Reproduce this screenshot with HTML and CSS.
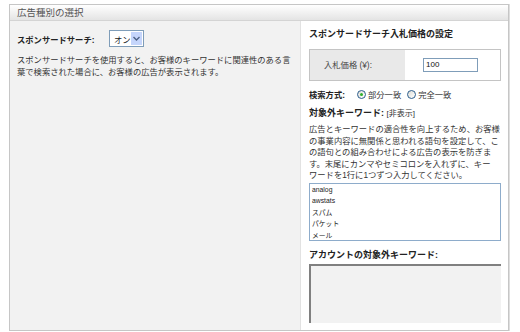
FILE: index.html
```html
<!DOCTYPE html>
<html lang="ja">
<head>
  <meta charset="UTF-8" />
  <title>広告種別の選択</title>
  <link rel="stylesheet" href="styles.css">
</head>
<body>

<div class="panel">
  <div class="panel-head">広告種別の選択</div>

  <div class="panel-body">
    <div class="col-left">
      <div class="field-row">
        <span class="label">スポンサードサーチ:</span>
        <span class="select">
          <span class="select-value">オン</span>
          <span class="select-btn">
            <svg width="7" height="5" viewBox="0 0 7 5"><path d="M0.5 1 L3.5 4 L6.5 1" fill="none" stroke="#4d6185" stroke-width="1.4"/></svg>
          </span>
        </span>
      </div>
      <p class="desc">スポンサードサーチを使用すると、お客様のキーワードに関連性のある言<br>葉で検索された場合に、お客様の広告が表示されます。</p>
    </div>

    <div class="col-right">
      <div class="heading">スポンサードサーチ入札価格の設定</div>
      <div class="bid-box">
        <div class="bid-label">入札価格 (¥):</div>
        <div class="bid-value"><span class="text-input">100</span></div>
      </div>

      <div class="match-row">
        <span class="label">検索方式:</span>
        <span class="radio checked"></span><span class="opt">部分一致</span>
        <span class="radio"></span><span class="opt">完全一致</span>
      </div>

      <div class="heading kw-head">対象外キーワード: <span class="toggle">[非表示]</span></div>
      <p class="kw-desc">広告とキーワードの適合性を向上するため、お客様<br>の事業内容に無関係と思われる語句を設定して、こ<br>の語句との組み合わせによる広告の表示を防ぎま<br>す。末尾にカンマやセミコロンを入れずに、キー<br>ワードを1行に1つずつ入力してください。</p>
      <div class="textarea">
        <div>analog</div>
        <div>awstats</div>
        <div>スパム</div>
        <div>パケット</div>
        <div>メール</div>
      </div>

      <div class="heading acc-head">アカウントの対象外キーワード:</div>
      <div class="textarea readonly"></div>
    </div>
  </div>
</div>

</body>
</html>
```

FILE: styles.css
```css
body {
  margin: 0;
  background: #fff;
  font-family: "Liberation Sans", "Noto Sans CJK JP", sans-serif;
  font-size: 8.3px;
  color: #333;
}

.panel {
  margin: 4px 0 0 9px;
  width: 498px;
  height: 325px;
  border: 1px solid #c6c6c6;
  box-shadow: 1px 0 0 #dedede;
  display: flex;
  flex-direction: column;
}

.panel-head {
  height: 15px;
  line-height: 15px;
  padding-left: 7px;
  font-size: 9.5px;
  color: #555;
  background: linear-gradient(#ffffff, #e4e4e4);
  border-bottom: 1px solid #d4d4d4;
}

.panel-body {
  flex: 1;
  display: flex;
  overflow: hidden;
}

.col-left {
  width: 276px;
  padding: 9px 7px 0;
  background: #f2f2f2;
}
.col-right {
  width: 192px;
  padding: 7px 7px 0 8px;
  border-left: 1px solid #e2e2e2;
  background: #fff;
}

.label {
  font-weight: bold;
  color: #222;
}

.field-row {
  display: flex;
  align-items: center;
  gap: 12px;
  height: 17px;
}
.field-row .label {
  width: 80px;
}
.select {
  display: flex;
  align-items: center;
  width: 33px;
  height: 15px;
  border: 1px solid #7f9db9;
  background: #fff;
  color: #222;
}
.select-value {
  flex: 1;
  padding-left: 4px;
}
.select-btn {
  width: 11px;
  height: 13px;
  margin-right: 1px;
  background: #c5d5fb;
  display: flex;
  align-items: center;
  justify-content: center;
}

.desc {
  margin: 7px 0 0;
  line-height: 12px;
  white-space: nowrap;
}

.heading {
  font-weight: bold;
  font-size: 9px;
  color: #222;
  line-height: 12px;
}

.bid-box {
  margin-top: 9px;
  display: flex;
  height: 30px;
  border: 1px solid #c4c4c4;
}
.bid-label {
  width: 81px;
  padding-left: 14px;
  background: #e9e9e9;
  line-height: 30px;
  color: #444;
}
.bid-value {
  flex: 1;
  padding-left: 18px;
  display: flex;
  align-items: center;
}
.text-input {
  width: 51px;
  height: 12px;
  line-height: 12px;
  padding-left: 2px;
  border: 1px solid #7f9db9;
  font-size: 8px;
  color: #111;
}

.match-row {
  margin-top: 7px;
  height: 12px;
  display: flex;
  align-items: center;
}
.match-row .label {
  width: 48px;
}
.radio {
  width: 7px;
  height: 7px;
  border: 1px solid #2b5d8c;
  border-radius: 50%;
  background: linear-gradient(135deg, #dcdcd6, #ffffff);
  margin-right: 2px;
  display: flex;
  align-items: center;
  justify-content: center;
}
.radio.checked::after {
  content: "";
  width: 3px;
  height: 3px;
  border-radius: 50%;
  background: #2fb02c;
}
.opt {
  margin-right: 6px;
}

.kw-head {
  margin-top: 7px;
}
.toggle {
  font-weight: normal;
  font-size: 8px;
  color: #333;
}
.kw-desc {
  margin: 4px 0 0;
  line-height: 11.5px;
  white-space: nowrap;
}

.textarea {
  margin-top: 1px;
  height: 56px;
  border: 1px solid #8eaccb;
  padding-left: 2px;
  font-size: 6.8px;
  line-height: 11.5px;
  color: #222;
}

.acc-head {
  margin-top: 8px;
}
.textarea.readonly {
  margin-top: 3px;
  height: 57px;
  border: none;
  border-left: 2px solid #808080;
  border-top: 2px solid #808080;
  background: #f2f2f2;
}
```
